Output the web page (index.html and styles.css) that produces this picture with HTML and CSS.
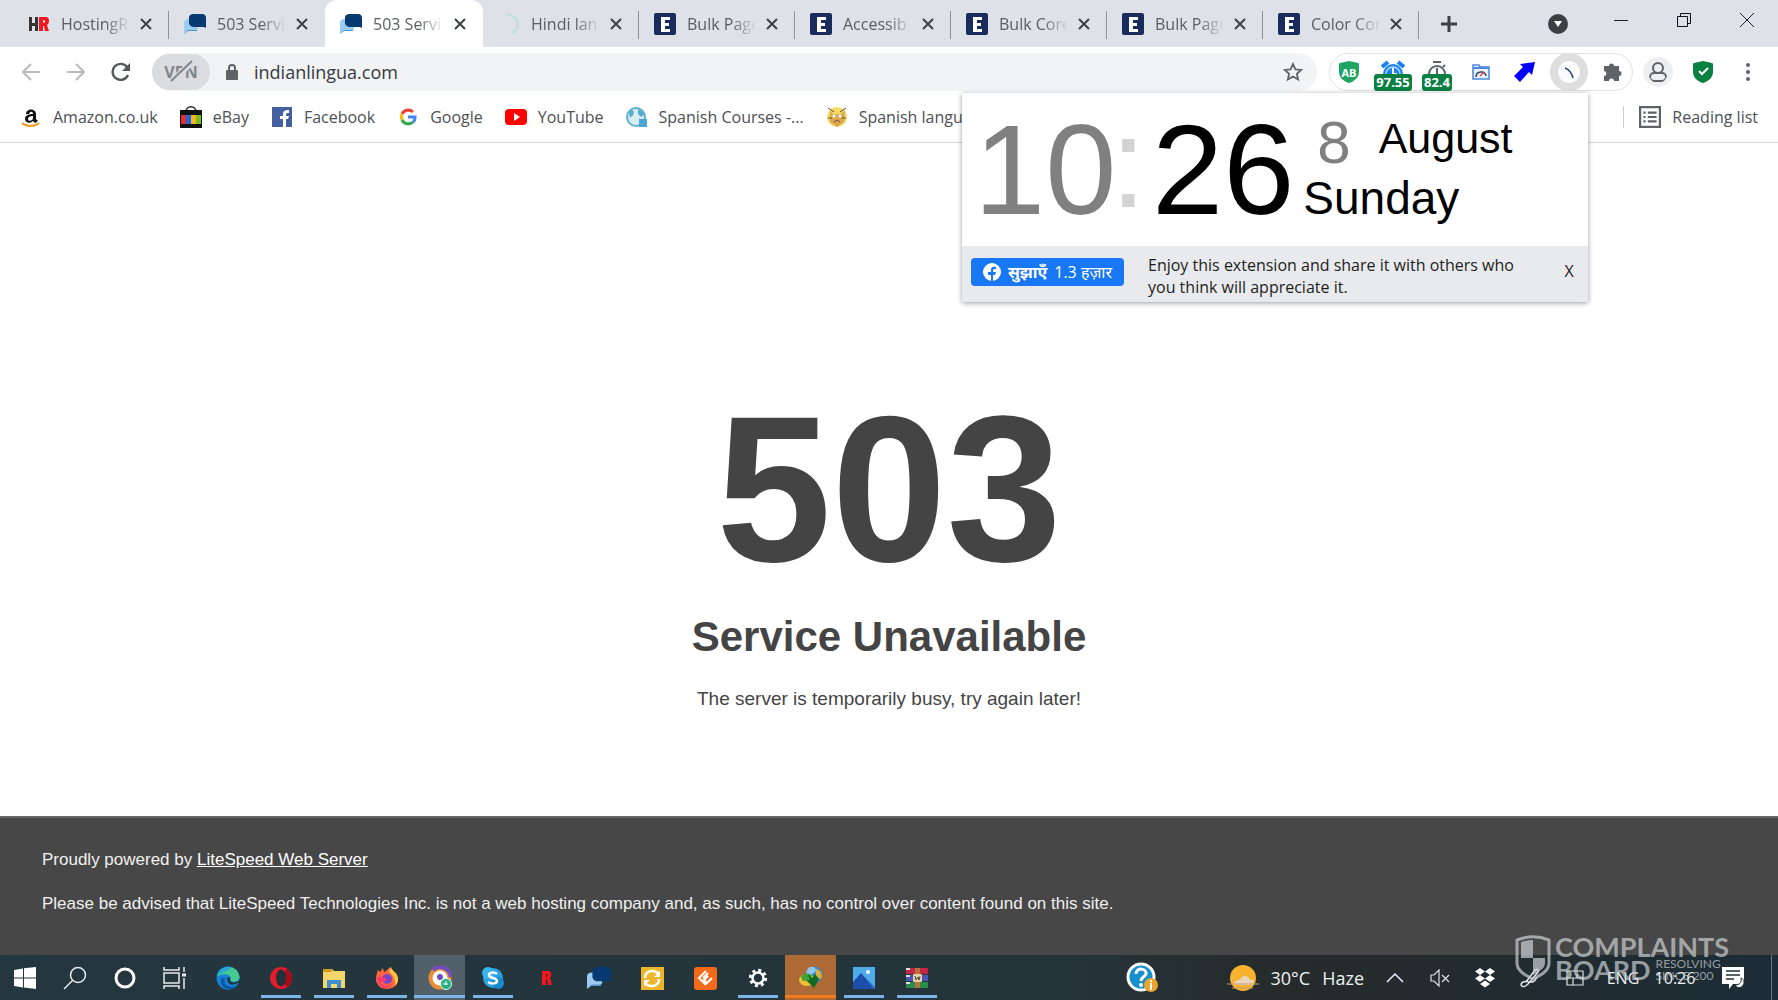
FILE: index.html
```html
<!DOCTYPE html>
<html lang="en">
<head>
  <meta charset="UTF-8">
  <title>503 Service Unavailable</title>
  <link rel="stylesheet" href="styles.css">
</head>
<body>
  <!-- Shared icons -->
  <svg class="sprite" aria-hidden="true">
    <symbol id="chat" viewBox="0 0 22 22">
      <path d="M0 21V10c0-3 2-4 5-4h9v7c0 3-1 5-4 5H4z" fill="#9ccbf0"/>
      <path d="M0 21l4-4h9v1H4z" fill="#4b95cf"/>
      <path d="M5 5c0-3 2-4 5-4h8c3 0 4 2 4 4v10l-2-1h-10c-3 0-5-2-5-4z" fill="#063a70"/>
    </symbol>
    <symbol id="ebox" viewBox="0 0 22 22">
      <rect width="22" height="22" rx="2" fill="#1a2c5b"/>
      <path d="M7 4h9v3h-5v3h4v3h-4v3h5v3H7z" fill="#fff"/>
    </symbol>
    <symbol id="cross" viewBox="0 0 12 12">
      <path d="M1 1l10 10M11 1L1 11" stroke="#3c4043" stroke-width="2" fill="none"/>
    </symbol>
    <symbol id="shield" viewBox="0 0 20 22">
      <path d="M10 0l9 2c1 0 1 1 1 2v7c0 5-4 9-10 11C4 20 0 16 0 11V4c0-1 0-2 1-2z"/>
    </symbol>
  </svg>

  <header class="browser">
    <div class="tab-strip">
      <div class="tab">
        <svg class="favicon" viewBox="0 0 22 22"><path d="M1 4h3v6h3V4h3v14H7v-5H4v5H1z" fill="#333"/><path d="M11 4h6c3 0 4 1 4 4 0 2-1 3-2 4l2 6h-4l-1-5h-1v5h-4zm4 3v3c3 0 3-3 0-3z" fill="#f3161c"/></svg>
        <a class="tab-title" href="#">HostingR</a>
        <button class="tab-close" aria-label="Close tab"><svg><use href="#cross"/></svg></button>
      </div>
      <div class="tab">
        <svg class="favicon"><use href="#chat"/></svg>
        <a class="tab-title" href="#">503 Servi</a>
        <button class="tab-close" aria-label="Close tab"><svg><use href="#cross"/></svg></button>
      </div>
      <div class="tab active">
        <svg class="favicon"><use href="#chat"/></svg>
        <a class="tab-title" href="#">503 Servi</a>
        <button class="tab-close" aria-label="Close tab"><svg><use href="#cross"/></svg></button>
      </div>
      <div class="tab">
        <svg class="favicon" viewBox="0 0 22 22"><path d="M8 2c6-1 12 3 12 9 0 4-2 7-6 9" fill="none" stroke="#bfe0d8" stroke-width="2"/></svg>
        <a class="tab-title" href="#">Hindi lan</a>
        <button class="tab-close" aria-label="Close tab"><svg><use href="#cross"/></svg></button>
      </div>
      <div class="tab">
        <svg class="favicon"><use href="#ebox"/></svg>
        <a class="tab-title" href="#">Bulk Page</a>
        <button class="tab-close" aria-label="Close tab"><svg><use href="#cross"/></svg></button>
      </div>
      <div class="tab">
        <svg class="favicon"><use href="#ebox"/></svg>
        <a class="tab-title" href="#">Accessib</a>
        <button class="tab-close" aria-label="Close tab"><svg><use href="#cross"/></svg></button>
      </div>
      <div class="tab">
        <svg class="favicon"><use href="#ebox"/></svg>
        <a class="tab-title" href="#">Bulk Core</a>
        <button class="tab-close" aria-label="Close tab"><svg><use href="#cross"/></svg></button>
      </div>
      <div class="tab">
        <svg class="favicon"><use href="#ebox"/></svg>
        <a class="tab-title" href="#">Bulk Page</a>
        <button class="tab-close" aria-label="Close tab"><svg><use href="#cross"/></svg></button>
      </div>
      <div class="tab">
        <svg class="favicon"><use href="#ebox"/></svg>
        <a class="tab-title" href="#">Color Con</a>
        <button class="tab-close" aria-label="Close tab"><svg><use href="#cross"/></svg></button>
      </div>
      <button class="new-tab" aria-label="New tab"><svg width="18" height="18" viewBox="0 0 18 18"><path d="M9 1v16M1 9h16" stroke="#3c4043" stroke-width="3"/></svg></button>
      <div class="window-buttons">
        <button aria-label="Search tabs"><svg width="20" height="20" viewBox="0 0 20 20"><circle cx="10" cy="10" r="10" fill="#3c4043"/><path d="M6 7h8l-4 6z" fill="#fff"/></svg></button>
        <button class="raised" aria-label="Minimize"><svg width="14" height="14" viewBox="0 0 14 14"><path d="M0 7.500h14" stroke="#222"/></svg></button>
        <button class="raised" aria-label="Restore"><svg width="14" height="14" viewBox="0 0 14 14"><path d="M.5 3.500h10v10H.5zM3.500 3V.5h10v10H11" fill="none" stroke="#111"/></svg></button>
        <button class="raised" aria-label="Close"><svg width="14" height="14" viewBox="0 0 14 14"><path d="M0 0l14 14M14 0L0 14" stroke="#222"/></svg></button>
      </div>
    </div>

    <div class="toolbar">
      <div class="nav-buttons">
        <button aria-label="Back"><svg width="18" height="18" viewBox="0 0 18 18"><path d="M18 9H1M9 1L1 9l8 8" fill="none" stroke="#b9bbbe" stroke-width="2"/></svg></button>
        <button aria-label="Forward"><svg width="18" height="18" viewBox="0 0 18 18"><path d="M0 9h17M9 1l8 8-8 8" fill="none" stroke="#b9bbbe" stroke-width="2"/></svg></button>
        <button aria-label="Reload"><svg width="20" height="20" viewBox="0 0 20 20"><path d="M17 13a8 8 0 1 1-1-8" fill="none" stroke="#55585c" stroke-width="2.400"/><path d="M19 1v8h-8z" fill="#55585c"/></svg></button>
      </div>
      <div class="address-bar">
        <button class="vpn" aria-label="VPN off">VPN<svg viewBox="0 0 24 22"><path d="M2 22L23 2" stroke="#dadce0" stroke-width="6"/><path d="M2 21L23 1" stroke="#80868b" stroke-width="2"/></svg></button>
        <svg class="lock" width="12" height="16" viewBox="0 0 12 16"><rect y="6" width="12" height="10" rx="1" fill="#5f6368"/><path d="M3 7V4a3 3 0 0 1 6 0v3" fill="none" stroke="#5f6368" stroke-width="2"/></svg>
        <input type="text" value="indianlingua.com" aria-label="Address">
        <button aria-label="Bookmark this page"><svg width="20" height="20" viewBox="0 0 20 20"><path d="M10 2l2.400 5.300 5.800.6-4.300 3.900 1.200 5.700-5.100-3-5.100 3 1.200-5.700L1.800 7.900l5.800-.6z" fill="none" stroke="#5f6368" stroke-width="1.800"/></svg></button>
      </div>
      <div class="extensions">
        <button aria-label="Ad blocker"><svg width="20" height="22" viewBox="0 0 20 22"><use href="#shield" fill="#1fa463"/></svg><span class="ab">AB</span></button>
        <button aria-label="Alarm"><svg width="24" height="24" viewBox="0 0 24 24"><circle cx="12" cy="14" r="10" fill="#1a80f5"/><circle cx="12" cy="14" r="7" fill="none" stroke="#b8d9ff" stroke-width="1.500"/><path d="M12 8v6h4" stroke="#fff" fill="none" stroke-width="2"/><path d="M1 7l6-5M23 7l-6-5" stroke="#1a80f5" stroke-width="4"/></svg><span class="badge">97.55</span></button>
        <button aria-label="Stopwatch"><svg width="24" height="24" viewBox="0 0 24 24"><circle cx="12" cy="14" r="8" fill="none" stroke="#5f6368" stroke-width="2"/><path d="M8 2h8M12 8v7M18 7l2-2" stroke="#5f6368" stroke-width="2"/></svg><span class="badge">82.4</span></button>
        <button aria-label="Page speed"><svg width="18" height="16" viewBox="0 0 18 16"><path d="M1 1h6l1 2h9v12H1z" fill="#e8f2ff" stroke="#4b86dd" stroke-width="1.500"/><path d="M1 4h16" stroke="#4b86dd" stroke-width="2"/><path d="M4 13c0-6 9-7 10-1" fill="none" stroke="#345" stroke-width="1.500"/><path d="M8 12l4-4" stroke="#e04040" stroke-width="1.500"/></svg></button>
        <button aria-label="Arrow"><svg width="22" height="22" viewBox="0 0 22 22"><path d="M21 1L18 14l-3-3-9 10-6-6 9-9-3-3z" fill="#0000fb"/></svg></button>
        <button class="pressed" aria-label="Clock"><svg width="22" height="22" viewBox="0 0 22 22"><circle cx="11" cy="11" r="11" fill="#fbfbfd"/><path d="M7 7c4 1 7 6 8 10" fill="none" stroke="#2e3a77" stroke-width="1.500"/></svg></button>
        <button aria-label="Extensions"><svg width="20" height="20" viewBox="0 0 20 20"><path d="M1 4h5a2.500 2.500 0 1 1 5 0h5v5a2.500 2.500 0 1 1 0 5v5h-5a2.500 2.500 0 0 0-5 0H1v-5a2.500 2.500 0 0 0 0-5V4z" fill="#5f6368"/></svg></button>
      </div>
      <div class="profile-buttons">
        <button class="profile" aria-label="Profile"><svg width="20" height="22" viewBox="0 0 20 22"><circle cx="10" cy="7" r="5" fill="none" stroke="#5f6368" stroke-width="2"/><rect x="2" y="12" width="16" height="8" rx="4" fill="none" stroke="#5f6368" stroke-width="2"/></svg></button>
        <button aria-label="Protection"><svg width="20" height="22" viewBox="0 0 20 22"><use href="#shield" fill="#0b8043"/><path d="M6 10l3 3 6-6" fill="none" stroke="#fff" stroke-width="2"/></svg></button>
        <button aria-label="Menu"><svg width="6" height="20" viewBox="0 0 6 20"><g fill="#5f6368"><circle cx="3" cy="3" r="2"/><circle cx="3" cy="10" r="2"/><circle cx="3" cy="17" r="2"/></g></svg></button>
      </div>
    </div>

    <nav class="bookmarks">
      <a href="#"><svg viewBox="0 0 22 22"><path d="M6 8c0-6 10-6 10 0v5l2 2-3 2-2-2c-3 3-8 2-8-2 0-4 4-5 8-5 0-3-3-3-4 0zm7 2c-3 0-5 1-5 3 0 3 5 2 5-1z" fill="#111"/><path d="M2 17c5 4 12 4 17 0" fill="none" stroke="#f59a1b" stroke-width="2"/></svg>Amazon.co.uk</a>
      <a href="#"><svg viewBox="0 0 22 22"><path d="M6 6c0-7 10-7 10 0" fill="none" stroke="#222" stroke-width="1.500"/><path d="M0 4h22v18H0z" fill="#111"/><path d="M1 9h5v9H1z" fill="#e23030"/><path d="M6 9h5v9H6z" fill="#2462d8"/><path d="M11 9h5v9h-5z" fill="#f4b81c"/><path d="M16 9h5v9h-5z" fill="#7dba1c"/></svg>eBay</a>
      <a href="#"><svg viewBox="0 0 22 22"><rect x="1" y="1" width="20" height="20" fill="#4560a0"/><path d="M12 21v-8H9v-3h3V8c0-3 2-4 6-4v3c-2 0-3 0-3 2v1h3l-1 3h-2v8z" fill="#fff"/></svg>Facebook</a>
      <a href="#"><svg viewBox="0 0 22 22" fill="none" stroke-width="3"><path d="M16 6a7 7 0 0 0-11 2" stroke="#ea4335"/><path d="M5 8a7 7 0 0 0 0 6" stroke="#fbbc05"/><path d="M5 14a7 7 0 0 0 11 2" stroke="#34a853"/><path d="M16 16c2-1 2-3 2-5h-7" stroke="#4285f4"/></svg>Google</a>
      <a href="#"><svg viewBox="0 0 22 22"><rect y="3" width="22" height="16" rx="4" fill="#f00"/><path d="M9 7l6 4-6 4z" fill="#fff"/></svg>YouTube</a>
      <a href="#"><svg viewBox="0 0 22 22"><circle cx="10" cy="11" r="9" fill="#d8edf4" stroke="#5eb0cc" stroke-width="2"/><path d="M3 6c4-4 6 0 4 3s-4 1-3 5M12 3c4 1 5 4 7 5l-4 3-3-3z" fill="#58adc9"/><path d="M13 13h8v8h-8z" fill="#4da3d6"/></svg>Spanish Courses -...</a>
      <a href="#"><svg viewBox="0 0 22 22"><circle cx="11" cy="11" r="10" fill="#f4dc62"/><path d="M4 5l3 3h8l4-4-1 12-7 5-7-5z" fill="#dda850"/><path d="M2 2l6 4M20 2l-6 4M2 12h4M20 12h-4M8 16l3-2 3 2" stroke="#68492a" fill="none"/><circle cx="8" cy="10" r="1.500" fill="#fff"/><circle cx="14" cy="10" r="1.500" fill="#fff"/></svg>Spanish langua</a>
      <button class="reading-list"><svg viewBox="0 0 20 20"><path d="M1 1h18v18H1z" fill="none" stroke="#5f6368" stroke-width="2"/><path d="M4 6h2M4 10h2M4 14h2M8 6h8M8 10h8M8 14h8" stroke="#5f6368" stroke-width="2"/></svg>Reading list</button>
    </nav>

    <!-- Clock extension popup -->
    <section class="clock-popup">
      <div class="clock">
        <span class="hours">10</span><span class="colon">:</span><span class="minutes">26</span>
        <div class="date">
          <div class="day-month"><span class="day">8</span><span class="month">August</span></div>
          <div class="weekday">Sunday</div>
        </div>
      </div>
      <div class="share-bar">
        <button class="fb-button"><svg width="18" height="18" viewBox="0 0 18 18"><circle cx="9" cy="9" r="9" fill="#fff"/><path d="M8 18v-6H5V9h3V7c0-3 2-4 5-3v2c-2 0-3 0-3 2v1h3l-1 3h-2v6z" fill="#1877f2"/></svg><b>सुझाएँ</b> 1.3 हज़ार</button>
        <p>Enjoy this extension and share it with others who you think will appreciate it.</p>
        <button class="dismiss">X</button>
      </div>
    </section>
  </header>

  <main class="error">
    <h1>503</h1>
    <h2>Service Unavailable</h2>
    <p>The server is temporarily busy, try again later!</p>
  </main>

  <footer class="site-footer">
    <p>Proudly powered by <a href="#">LiteSpeed Web Server</a></p>
    <p>Please be advised that LiteSpeed Technologies Inc. is not a web hosting company and, as such, has no control over content found on this site.</p>
  </footer>

  <div class="taskbar">
    <div class="system-apps">
      <button aria-label="Start"><svg viewBox="0 0 24 24" fill="#fff"><path d="M1 4l9-1.500v9H1zM11 2.300L23 1v10.500H11zM1 12.500h9v9L1 20zM11 12.500h12V23l-12-1.500z"/></svg></button>
      <button aria-label="Search"><svg viewBox="0 0 24 24" fill="none" stroke="#e8ecee" stroke-width="1.500"><circle cx="15" cy="9" r="7.500"/><path d="M10 14L1 23"/></svg></button>
      <button aria-label="Cortana"><svg viewBox="0 0 24 24"><circle cx="12" cy="12" r="9" fill="none" stroke="#fff" stroke-width="3"/></svg></button>
      <button aria-label="Task view"><svg viewBox="0 0 24 24" fill="none" stroke="#e8ecee" stroke-width="1.500"><path d="M1 7h15v10H1zM1 1v3h15V1M1 23v-3h15v3M21 1v5M21 12v11"/><path d="M19 9h4" stroke-width="3"/></svg></button>
    </div>
    <div class="apps">
      <button aria-label="Edge"><svg viewBox="0 0 24 24"><circle cx="12" cy="12" r="11.500" fill="#1782d6"/><path d="M1 10C4-2 22-2 23.500 11c0 5-7 6-9 3 2-4-4-8-13-4z" fill="#45c98e"/><path d="M1 10C3 2 10 0 15 1c-2 5-9 4-14 9z" fill="#22a8d8"/><path d="M9 12c-3 6 4 11 12 8-4 5-14 4-16-3-1-4 1-6 4-5z" fill="#0b55a5"/><path d="M12 11c3 0 1 4 3 5 3 1 6 0 9-2-1 4-10 7-12 2-1-2-1-4 0-5z" fill="#22323a"/></svg></button>
      <button class="running" aria-label="Opera"><svg viewBox="0 0 24 24"><circle cx="12" cy="12" r="11" fill="#e31b2c"/><path d="M18 3c7 5 6 14 0 18-4-2-5-16 0-18z" fill="#a20d19"/><ellipse cx="12" cy="12" rx="5" ry="8.500" fill="#22323a"/></svg></button>
      <button class="running" aria-label="File Explorer"><svg viewBox="0 0 24 24"><path d="M1 3h9l2 2h11v17H1z" fill="#f5d66c"/><path d="M1 3h9v3H1z" fill="#d99a1e"/><path d="M5 22v-8h14v8h-4v-4H9v4z" fill="#3d8fcd"/></svg></button>
      <button class="running" aria-label="Firefox"><svg viewBox="0 0 24 24"><path d="M3 4l2 2 3-4 1 4c3-1 4-4 7-5 0 4 7 5 7 12 0 6-5 10-11 10S1 19 1 13c0-4 1-6 2-9z" fill="#ff643d"/><path d="M16 1c0 4 7 5 7 12 0 3-1 5-3 7 1-8-3-12-6-14z" fill="#ffc63d"/><circle cx="12" cy="13" r="5" fill="#7b45c9"/><path d="M2 12c5-3 8 0 10 1-2 3-5 3-7 3 2 4 8 5 12 2-4 7-14 4-15-6z" fill="#f73a6b"/></svg></button>
      <button class="running active" aria-label="Chrome"><svg viewBox="0 0 24 24"><circle cx="12" cy="12" r="9.500" fill="#fff" stroke="#ee8b35" stroke-width="4"/><path d="M5 4c6-6 17-2 18 7" fill="none" stroke="#704cc0" stroke-width="4"/><circle cx="12" cy="11" r="3" fill="#704cc0"/><circle cx="18" cy="18" r="5.500" fill="#27ae85" stroke="#d9fff1"/><path d="M15 18h5M18 15v4" stroke="#fff"/></svg></button>
      <button class="running" aria-label="Skype"><svg viewBox="0 0 24 24"><circle cx="12" cy="12" r="10" fill="#29a3e4"/><circle cx="7" cy="7" r="6" fill="#36b4ef"/><circle cx="17" cy="17" r="6" fill="#168bd2"/><path d="M16 8c-2-2-8-2-8 1 0 4 8 2 8 6 0 3-6 3-9 1" fill="none" stroke="#fff" stroke-width="2.500"/></svg></button>
      <button aria-label="R"><svg viewBox="0 0 24 24"><path d="M8 5h6c4 0 4 5 2 7l2 7h-4l-1-6h-1v6H8zm4 3v3c2 0 2-3 0-3z" fill="#f3161c"/></svg></button>
      <button aria-label="Chat"><svg viewBox="0 0 24 24"><use href="#chat"/></svg></button>
      <button aria-label="Sync"><svg viewBox="0 0 24 24"><path d="M1 1h23v23H1z" fill="#eeb62c"/><path d="M5 12c0-8 10-9 14-4M19 13c0 8-10 9-14 4" fill="none" stroke="#fff" stroke-width="2.500"/><path d="M20 5v6h-6zM4 20v-6h6z" fill="#fff"/></svg></button>
      <button aria-label="Code"><svg viewBox="0 0 24 24"><rect x="1" y="1" width="23" height="23" rx="3" fill="#f26a1b"/><path d="M13 5l-7 7 7 7M10 12l5-5M19 12l-5 5-3-3 4-4" fill="none" stroke="#fff" stroke-width="2"/></svg></button>
      <button class="running" aria-label="Settings"><svg viewBox="0 0 24 24"><circle cx="12" cy="12" r="7.640" fill="none" stroke="#fff" stroke-width="3" stroke-dasharray="3 3"/><circle cx="12" cy="12" r="5.500" fill="none" stroke="#fff" stroke-width="2.500"/></svg></button>
      <button class="attention" aria-label="Download Manager"><svg viewBox="0 0 24 24"><circle cx="15" cy="9" r="8.500" fill="#3987c4"/><path d="M9 2c4-3 9 0 8 3l-5 4-5-2z" fill="#8fc7e8"/><path d="M17 3c5 1 7 6 5 10l-5-2z" fill="#d9b13a"/><ellipse cx="8" cy="14" rx="8" ry="6" fill="#eabf35"/><path d="M2 11c3-5 9-4 11-1l-2 4-7 1z" fill="#3da134"/><path d="M9 8l4 4 3-4 4 5-5 9-8-8h4z" fill="#126c26"/></svg></button>
      <button class="running" aria-label="Photos"><svg viewBox="0 0 24 24"><path d="M1 1h22v22H1z" fill="#4eaceb"/><path d="M1 16L9 7l14 16H1z" fill="#1d4faa"/><path d="M14 12l9 9v2h-1z" fill="#2f7cd3"/><circle cx="16" cy="6" r="2" fill="#fff"/></svg></button>
      <button class="running" aria-label="WinRAR"><svg viewBox="0 0 24 24"><path d="M1 2h22v6H1z" fill="#c52645"/><path d="M1 9h22v6H1z" fill="#4b55b5"/><path d="M1 16h22v6H1z" fill="#278d4b"/><path d="M1 3h4M1 10h4M1 17h4" stroke="#ddd" stroke-width="2"/><path d="M10 2h5v20h-5z" fill="#b7713a"/><rect x="8" y="8" width="9" height="8" rx="1" fill="#e5d0a5"/><path d="M10 10l1 4 2-3 1 3 1-4" fill="none" stroke="#543"/></svg></button>
    </div>
    <div class="tray">
      <button class="help" aria-label="Help"><svg width="32" height="32" viewBox="0 0 32 32"><circle cx="15" cy="15" r="13" fill="#168fce" stroke="#fff" stroke-width="3"/><path d="M10 12c0-7 11-6 10 0-1 3-5 3-5 7" fill="none" stroke="#fff" stroke-width="3"/><circle cx="15" cy="23" r="2" fill="#fff"/><circle cx="25" cy="23" r="7" fill="#e9a52d"/><path d="M25 21v7M25 18v2" stroke="#fff" stroke-width="2"/></svg></button>
      <button class="weather"><svg width="32" height="28" viewBox="0 0 32 28"><circle cx="16" cy="14" r="13" fill="#f7b230"/><path d="M8 18c2-3 5-1 6-4 4-4 8-1 9 2 5-1 4 4 2 5H9c-3 0-3-2-1-3z" fill="#ead5bd"/><path d="M0 20h32M5 24h21" stroke="#c49a69"/></svg><span>30°C</span><span>Haze</span></button>
      <button aria-label="Show hidden icons"><svg width="18" height="12" viewBox="0 0 18 12"><path d="M1 10l8-8 8 8" fill="none" stroke="#eef" stroke-width="1.500"/></svg></button>
      <button aria-label="Volume muted"><svg width="20" height="18" viewBox="0 0 20 18"><path d="M1 6h3l5-5v16l-5-5H1zM12 6l7 7M19 6l-7 7" fill="none" stroke="#dde2e5" stroke-width="1.200"/></svg></button>
      <button aria-label="Dropbox"><svg width="22" height="20" viewBox="0 0 22 20" fill="#fff"><path d="M6 0l5 3.500L6 7 1 3.500zM16 0l5 3.500L16 7l-5-3.500zM6 7l5 3.500L6 14l-5-3.500zM16 7l5 3.500-5 3.500-5-3.500zM11 12.500l5 3.500-5 3.500L6 16z"/></svg></button>
      <button aria-label="Pen"><svg width="20" height="20" viewBox="0 0 20 20"><path d="M6 14L15 2c3-2 4 1 3 2L8 16c-6 6-9 0-5-2 6-2 10 4 14-5" fill="none" stroke="#e4e8ea" stroke-width="1.500"/></svg></button>
      <button aria-label="Touchpad"><svg width="18" height="16" viewBox="0 0 18 16"><path d="M1 1h16v14H1zM1 8h16M7 8v7M11 8V4" fill="none" stroke="#dde2e5" stroke-width="1.200"/></svg></button>
      <button class="language">ENG</button>
      <button class="time">10:26</button>
      <button class="notifications" aria-label="Notifications"><svg width="24" height="24" viewBox="0 0 24 24"><path d="M1 1h22v17H12l-4 5v-5H1z" fill="#fff"/><path d="M5 5h14M5 9h14M5 13h8" stroke="#22323a" stroke-width="1.500"/><path d="M20 12c1 5-2 7-6 7 3 5 9 2 9-3 0-2-1-3-3-4z" fill="#fff" stroke="#22323a"/></svg></button>
    </div>
    <!-- Watermark over the corner -->
    <div class="watermark">
      <svg width="36" height="46" viewBox="0 0 36 46"><path d="M2 5c10-4 22-4 32 0v23c0 8-8 12-16 16C10 40 2 36 2 28z" fill="none" stroke="currentColor" stroke-width="3"/><path d="M6 7c4-1 8-2 12-2v18h12v5c0 5-5 8-12 12V23H6z" fill="currentColor"/></svg>
      <div>
        <div class="brand">COMPLAINTS</div>
        <div class="brand-row"><span class="brand">BOARD</span><span class="since">RESOLVING<br>SINCE 200</span></div>
      </div>
    </div>
  </div>
</body>
</html>
```
FILE: styles.css
```css
* {
  box-sizing: border-box;
}
body {
  margin: 0;
  min-height: 100vh;
  display: flex;
  flex-direction: column;
  background: #fff;
  font-family: "Open Sans", "Noto Sans", sans-serif;
  font-size: 16px;
  color: #4d5054;
}
button {
  display: flex;
  align-items: center;
  justify-content: center;
  padding: 0;
  border: none;
  background: none;
  font: inherit;
  color: inherit;
  cursor: pointer;
}
a {
  color: inherit;
  text-decoration: none;
}
.sprite {
  display: none;
}

/* Tabs */
.browser {
  position: relative;
}
.tab-strip {
  display: flex;
  height: 47px;
  padding-left: 13px;
  background: #dee1e7;
}
.tab {
  display: flex;
  align-items: center;
  width: 156px;
  padding: 0 11px 0 15px;
  background: linear-gradient(#909296, #909296) right 11px / 1px 28px no-repeat;
}
.tab:has(+ .active) {
  background: none;
}
.tab.active {
  width: 158px;
  background: #fff;
  border-radius: 12px 12px 0 0;
}
.favicon {
  width: 22px;
  height: 22px;
  flex: none;
}
.tab-title {
  flex: 1;
  min-width: 0;
  margin-left: 11px;
  overflow: hidden;
  white-space: nowrap;
  color: #5a5d61;
  -webkit-mask-image: linear-gradient(to right, #000 60%, transparent 95%);
  mask-image: linear-gradient(to right, #000 60%, transparent 95%);
}
.tab-close {
  width: 24px;
  height: 24px;
}
.tab-close svg {
  width: 12px;
  height: 12px;
}
.new-tab {
  width: 60px;
}
.window-buttons {
  display: flex;
  margin-left: auto;
}
.window-buttons button {
  width: 63px;
}
.window-buttons .raised {
  padding-bottom: 7px;
}

/* Toolbar */
.toolbar {
  display: flex;
  align-items: center;
  height: 50px;
  padding: 0 8px;
}
.nav-buttons,
.profile-buttons,
.extensions {
  display: flex;
  align-items: center;
}
.nav-buttons button,
.profile-buttons button {
  width: 45px;
  height: 38px;
}
.address-bar {
  flex: 1;
  display: flex;
  align-items: center;
  height: 38px;
  margin: 0 12px 0 9px;
  padding-right: 14px;
  border-radius: 19px;
  background: #f1f3f4;
}
.vpn {
  position: relative;
  width: 58px;
  height: 36px;
  margin-right: 16px;
  border-radius: 18px;
  background: #dadce0;
  color: #80868b;
  font-weight: bold;
}
.vpn svg {
  position: absolute;
  left: 17px;
  top: 6px;
  width: 24px;
  height: 22px;
}
.address-bar input {
  flex: 1;
  min-width: 0;
  margin-left: 16px;
  padding: 0;
  border: none;
  outline: none;
  background: none;
  font: inherit;
  font-size: 18px;
  color: #36393c;
}
.extensions {
  height: 38px;
  border: 1px solid #dfe1e5;
  border-radius: 19px;
}
.extensions button {
  position: relative;
  width: 44px;
  height: 38px;
}
.extensions button:first-child {
  width: 38px;
  margin-right: 3px;
}
.extensions button:last-child {
  width: 38px;
  margin-left: 3px;
}
.ab {
  position: absolute;
  color: #fff;
  font-size: 11px;
  font-weight: bold;
}
.badge {
  position: absolute;
  bottom: 0;
  padding: 0 2px;
  border-radius: 3px;
  background: #0b8043;
  color: #fff;
  font-size: 13px;
  font-weight: bold;
  line-height: 17px;
}
.extensions .pressed {
  width: 38px;
  margin: 0 3px;
  border-radius: 50%;
  background: #dedede;
}
.profile-buttons {
  margin-left: 2px;
}
.profile svg {
  box-sizing: content-box;
  padding: 4px 5px;
  border-radius: 50%;
  background: #eeeff0;
}

/* Bookmarks */
.bookmarks {
  display: flex;
  align-items: center;
  gap: 22px;
  height: 46px;
  padding: 0 20px 6px;
  border-bottom: 1px solid #d5d7da;
}
.bookmarks a,
.reading-list {
  display: flex;
  align-items: center;
  gap: 11px;
  white-space: nowrap;
}
.bookmarks svg {
  width: 22px;
  height: 22px;
}
.bookmarks .reading-list {
  height: 22px;
  margin-left: auto;
  padding-left: 15px;
  border-left: 1px solid #ccced1;
}

/* Clock popup */
.clock-popup {
  position: absolute;
  top: 93px;
  right: 190px;
  width: 626px;
  background: #fff;
  box-shadow: 0 1px 5px rgba(0, 0, 0, 0.4);
}
.clock {
  display: flex;
  height: 153px;
  padding-left: 12px;
  font-family: "Liberation Sans", Arial, sans-serif;
  font-size: 128px;
  line-height: 153px;
  color: #000;
}
.hours,
.day {
  color: #808080;
}
.colon {
  margin: 0 6px 0 -6px;
  line-height: 140px;
  color: #d3d3d3;
}
.date {
  display: flex;
  flex-direction: column;
  margin-left: 9px;
  padding-top: 18px;
}
.day-month {
  display: flex;
  gap: 28px;
  margin-left: 14px;
}
.day {
  font-size: 60px;
  line-height: 64px;
}
.month {
  font-size: 43px;
  line-height: 54px;
}
.weekday {
  font-size: 46px;
  line-height: 46px;
}
.share-bar {
  display: flex;
  align-items: flex-start;
  height: 56px;
  padding: 8px 9px;
  background: #e9eaed;
  color: #1c1e21;
}
.fb-button {
  gap: 7px;
  width: 153px;
  height: 28px;
  margin-top: 4px;
  border-radius: 4px;
  background: #1877f2;
  color: #fff;
  font-size: 16px;
  white-space: nowrap;
}
.share-bar p {
  width: 380px;
  margin: 0 0 0 24px;
  line-height: 22px;
}
.dismiss {
  width: 20px;
  height: 34px;
  margin-left: auto;
}

/* Error message */
.error {
  flex: 1;
  display: flex;
  flex-direction: column;
  align-items: center;
  justify-content: center;
  padding-top: 138px;
  font-family: "Liberation Sans", Arial, sans-serif;
  color: #444;
}
.error h1 {
  margin: 0;
  font-size: 207px;
  line-height: 206px;
}
.error h2 {
  margin: 20px 0 26px;
  font-size: 42px;
  line-height: 48px;
}
.error p {
  margin: 0;
  font-size: 19px;
  line-height: 24px;
}
.site-footer {
  padding: 30px 42px 39px;
  border-top: 2px solid #666;
  background: #474747;
  font-family: "Liberation Sans", Arial, sans-serif;
  font-size: 17px;
  line-height: 24px;
  color: #f0f0f0;
}
.site-footer p {
  margin: 0 0 20px;
}
.site-footer p:last-child {
  margin: 0;
}
.site-footer a {
  color: #fff;
  text-decoration: underline;
}

/* Taskbar */
.taskbar {
  position: relative;
  display: flex;
  height: 45px;
  background: linear-gradient(to right, #24363e, #25343b 60%, #262b2b 72%, #1c2c36);
  color: #eef1f2;
}
.system-apps,
.apps,
.tray {
  display: flex;
}
.apps {
  margin-left: 1px;
}
.system-apps button {
  width: 50px;
}
.apps button {
  width: 53px;
  border: solid transparent;
  border-width: 0 1px;
}
.system-apps svg,
.apps svg {
  width: 24px;
  height: 24px;
}
.apps .running {
  background: linear-gradient(#7bb5e7, #7bb5e7) center 40px / 40px 3px no-repeat;
}
.apps .active {
  background: linear-gradient(#7bb5e7, #7bb5e7) center 40px / 51px 3px no-repeat padding-box, linear-gradient(#526169, #526169) padding-box;
}
.apps .attention {
  background: linear-gradient(#f07a1c, #f07a1c) center 40px / 51px 3px no-repeat padding-box, linear-gradient(#ad6a35, #ad6a35) padding-box;
}
.tray {
  margin-left: auto;
  padding-right: 6px;
  border-right: 1px solid #67747b;
  margin-right: 6px;
}
.tray button {
  width: 45px;
}
.tray .help {
  margin-right: 62px;
}
.tray .weather {
  gap: 12px;
  width: auto;
  margin-right: 8px;
  font-size: 18px;
}
.tray .language,
.tray .time {
  width: 52px;
  font-size: 16px;
}
.tray .notifications {
  width: 64px;
}
.watermark {
  position: absolute;
  right: 49px;
  bottom: 18px;
  display: flex;
  gap: 4px;
  font-family: Lato, sans-serif;
  color: rgba(205, 210, 212, 0.7);
  pointer-events: none;
}
.brand {
  font-size: 27px;
  font-weight: bold;
  line-height: 23px;
}
.brand-row {
  display: flex;
  gap: 5px;
}
.since {
  font-size: 12px;
  line-height: 12px;
}
```
